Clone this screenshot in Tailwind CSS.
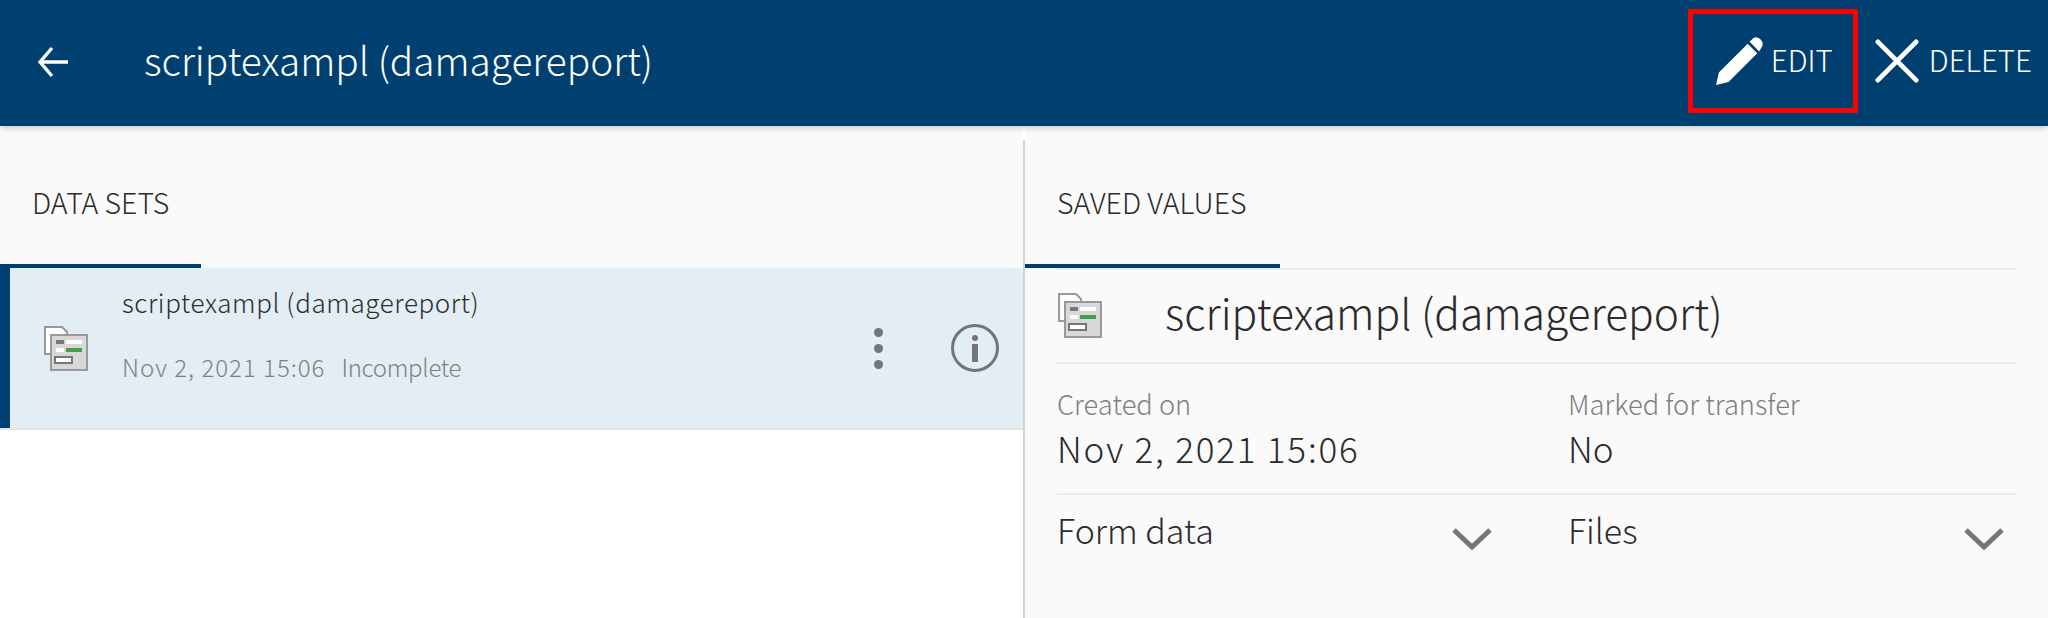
<!DOCTYPE html>
<html lang="en">
<head>
  <meta charset="UTF-8">
  <title>scriptexampl (damagereport)</title>
  <script src="https://cdn.jsdelivr.net/npm/@tailwindcss/browser@4"></script>
</head>
<body class="h-[618px] overflow-hidden bg-white font-['Noto_Sans_CJK_SC',sans-serif] text-[#2b2b2b]">
  <header class="relative z-10 flex h-[126px] items-center bg-[#004071] pb-[4px] text-white shadow-[0_2px_6px_rgba(0,0,0,0.2)]">
    <svg class="mt-[2px] ml-[36px] h-[34px] w-[34px]" viewBox="0 0 34 34" fill="none" stroke="white" stroke-width="3.4"><path d="M32 17H4M16 3 4 17l12 14"/></svg>
    <h1 class="mb-[4px] ml-[74px] text-[38.8px] leading-[44px] font-light">scriptexampl (damagereport)</h1>
    <div class="ml-auto flex items-center pr-[16px]">
      <button class="flex h-[104px] w-[170px] items-center border-[5px] border-[#ff0000] pl-[23px]">
        <svg class="h-[48px] w-[48px]" viewBox="0 0 50 50" fill="white"><path d="M0 50 3 37 33 7 43 17 13 47ZM35 5 39 1Q42-1 46 2 50 6 48 10L45 15Z"/></svg>
        <span class="mb-[4px] ml-[7px] text-[29.5px] leading-[32px] font-light">EDIT</span>
      </button>
      <button class="ml-[17px] flex items-center">
        <svg class="h-[44px] w-[44px]" viewBox="0 0 46 46" stroke="white" stroke-width="5" stroke-linecap="round"><path d="M3 3 43 43M43 3 3 43"/></svg>
        <span class="mb-[4px] ml-[10px] text-[29.5px] leading-[32px] font-light">DELETE</span>
      </button>
    </div>
  </header>

  <main class="flex h-[492px]">
    <section class="w-[1023px]">
      <div class="h-[138px] bg-[#fafafa] pt-[60px] pl-[32px]">
        <h2 class="text-[28.5px] leading-[32px] font-light">DATA SETS</h2>
      </div>
      <div class="h-[4px] bg-[#fafafa]"><div class="h-[4px] w-[201px] bg-[#004071]"></div></div>
      <div class="flex h-[160px] border-l-[10px] border-[#004071] bg-[#e3edf4]">
        <div class="mt-[58px] ml-[34px] w-[44px]">
          <svg class="h-[45px] w-[44px]" viewBox="0 0 44 45"><path d="M1 1H18L23 6V28H1Z" fill="#fff" stroke="#999" stroke-width="2"/><rect x="7" y="9" width="36" height="35" fill="#d8d8d8" stroke="#999" stroke-width="2"/><rect x="12" y="14" width="8" height="4" fill="#777"/><rect x="22" y="14" width="16" height="4" fill="#fff"/><rect x="12" y="22" width="8" height="4" fill="#fff"/><rect x="22" y="22" width="16" height="4" fill="#43a047"/><rect x="11" y="31" width="17" height="6" fill="#fff" stroke="#777" stroke-width="2"/></svg>
        </div>
        <div class="ml-[34px] flex-1 pt-[15px]">
          <p class="text-[26px] leading-[38px] font-light tracking-[0.6px]">scriptexampl (damagereport)</p>
          <p class="mt-[31px] text-[24px] leading-[30px] font-light text-[#808080]"><span class="tracking-[1px]">Nov 2, 2021 15:06</span><span class="ml-[16px] tracking-[-0.3px]">Incomplete</span></p>
        </div>
        <div class="mr-[24px] flex items-center">
          <div class="flex flex-col gap-[7px]">
            <span class="h-[9px] w-[9px] rounded-full bg-[#757575]"></span>
            <span class="h-[9px] w-[9px] rounded-full bg-[#757575]"></span>
            <span class="h-[9px] w-[9px] rounded-full bg-[#757575]"></span>
          </div>
          <svg class="ml-[68px] h-[48px] w-[48px]" viewBox="0 0 48 48"><circle cx="24" cy="24" r="22.5" fill="none" stroke="#757575" stroke-width="3"/><circle cx="24" cy="14" r="3" fill="#757575"/><rect x="21" y="20" width="6" height="18" fill="#757575"/></svg>
        </div>
      </div>
      <div class="h-[2px] bg-[#e3e3e3]"></div>
    </section>

    <section class="mt-[14px] w-[2px] bg-[#d2d2d2]"></section>

    <section class="flex-1 bg-[#fafafa]">
      <div class="h-[138px] pt-[60px] pl-[32px]">
        <h2 class="text-[28.5px] leading-[32px] font-light">SAVED VALUES</h2>
      </div>
      <div class="h-[4px] w-[255px] bg-[#004071]"></div>
      <div class="mr-[32px] ml-[32px]">
        <div class="flex h-[96px] items-center border-y-2 border-[#ebebeb]">
          <svg class="mt-[-2px] ml-[1px] h-[45px] w-[44px]" viewBox="0 0 44 45"><path d="M1 1H18L23 6V28H1Z" fill="#fff" stroke="#999" stroke-width="2"/><rect x="7" y="9" width="36" height="35" fill="#d8d8d8" stroke="#999" stroke-width="2"/><rect x="12" y="14" width="8" height="4" fill="#777"/><rect x="22" y="14" width="16" height="4" fill="#fff"/><rect x="12" y="22" width="8" height="4" fill="#fff"/><rect x="22" y="22" width="16" height="4" fill="#43a047"/><rect x="11" y="31" width="17" height="6" fill="#fff" stroke="#777" stroke-width="2"/></svg>
          <p class="mb-[8px] ml-[63px] text-[42.5px] leading-[50px] font-light">scriptexampl (damagereport)</p>
        </div>
        <div class="grid h-[131px] grid-cols-[511px_1fr] border-b-2 border-[#ebebeb] pt-[21px]">
          <div>
            <p class="text-[27.3px] leading-[36px] font-light text-[#808080]">Created on</p>
            <p class="mt-[5px] text-[35px] leading-[44px] font-light tracking-[1.8px]">Nov 2, 2021 15:06</p>
          </div>
          <div>
            <p class="text-[27.3px] leading-[36px] font-light text-[#808080]">Marked for transfer</p>
            <p class="mt-[5px] text-[35px] leading-[44px] font-light">No</p>
          </div>
        </div>
        <div class="grid grid-cols-[511px_1fr] pt-[13px]">
          <div class="flex items-start pr-[76px]">
            <p class="text-[34px] leading-[44px] font-light">Form data</p>
            <svg class="mt-[20px] ml-auto h-[22px] w-[40px]" viewBox="0 0 40 22" fill="none" stroke="#757575" stroke-width="5"><path d="M2 2 20 19 38 2"/></svg>
          </div>
          <div class="flex items-start pr-[12px]">
            <p class="text-[34px] leading-[44px] font-light">Files</p>
            <svg class="mt-[20px] ml-auto h-[22px] w-[40px]" viewBox="0 0 40 22" fill="none" stroke="#757575" stroke-width="5"><path d="M2 2 20 19 38 2"/></svg>
          </div>
        </div>
      </div>
    </section>
  </main>
</body>
</html>
